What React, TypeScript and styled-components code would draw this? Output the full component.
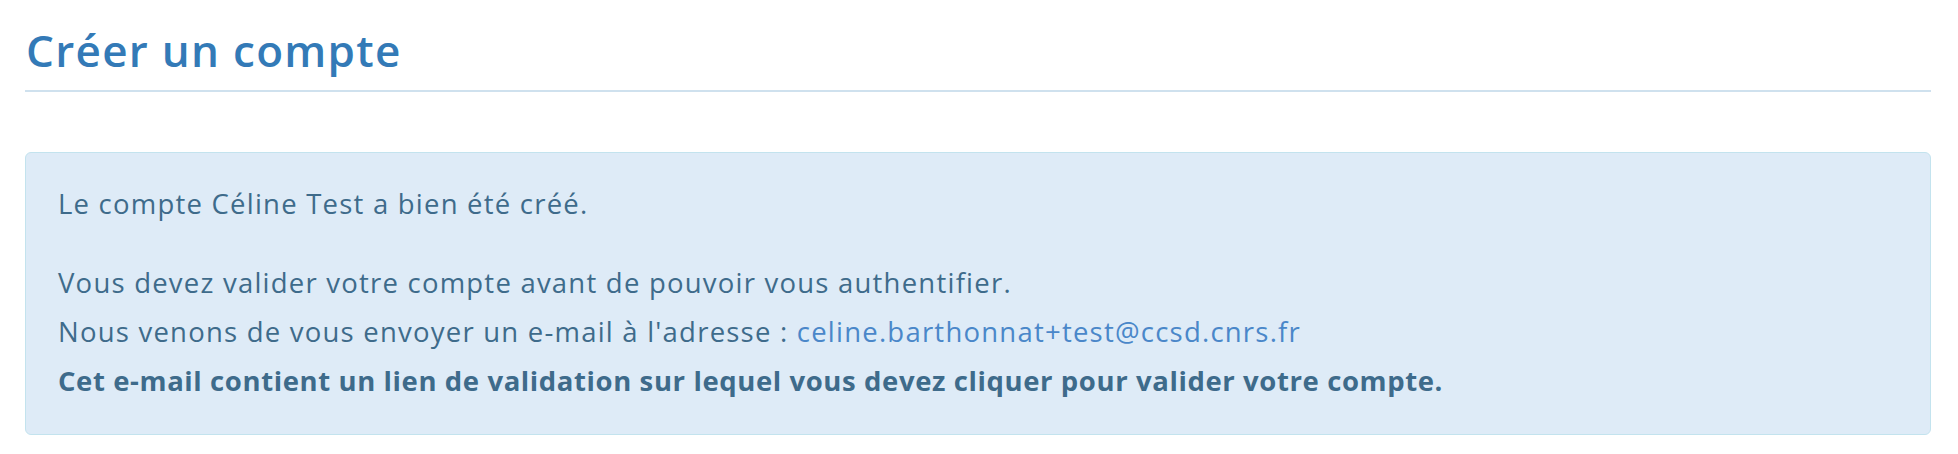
import React from "react";
import styled, { createGlobalStyle } from "styled-components";

const GlobalStyle = createGlobalStyle`
  html, body {
    margin: 0;
    padding: 0;
    background: #ffffff;
  }
  body {
    font-family: "Open Sans", "Noto Sans", Arial, sans-serif;
  }
`;

const Page = styled.main`
  padding: 0 27px 0 25px;
`;

const Title = styled.h1`
  margin: 0;
  padding: 23px 0 13px 1px;
  font-size: 44px;
  line-height: 54px;
  font-weight: 600;
  letter-spacing: 1.3px;
  color: #337ab7;
  border-bottom: 2px solid #cfe1ee;
`;

const Alert = styled.section`
  margin-top: 60px;
  padding: 26px 32px 29px;
  background: #deebf7;
  border: 1px solid #c3e3ee;
  border-radius: 6px;
  color: #3e6b8b;
  font-size: 27.5px;
  line-height: 49px;
  letter-spacing: 1.22px;
`;

const Paragraph = styled.p<{ $gap?: number }>`
  margin: 0;
  margin-top: ${(p) => p.$gap ?? 0}px;
`;

const Link = styled.a`
  color: #4a87c9;
  text-decoration: none;
`;

const Strong = styled.strong`
  font-weight: 700;
  letter-spacing: 0.6px;
`;

export default function App() {
  return (
    <>
      <GlobalStyle />
      <Page>
        <Title>Créer un compte</Title>
        <Alert>
          <Paragraph>Le compte Céline Test a bien été créé.</Paragraph>
          <Paragraph $gap={30}>
            Vous devez valider votre compte avant de pouvoir vous authentifier.
            <br />
            Nous venons de vous envoyer un e-mail à l'adresse :{" "}
            <Link href="#">celine.barthonnat+test@ccsd.cnrs.fr</Link>
            <br />
            <Strong>
              Cet e-mail contient un lien de validation sur lequel vous devez
              cliquer pour valider votre compte.
            </Strong>
          </Paragraph>
        </Alert>
      </Page>
    </>
  );
}
